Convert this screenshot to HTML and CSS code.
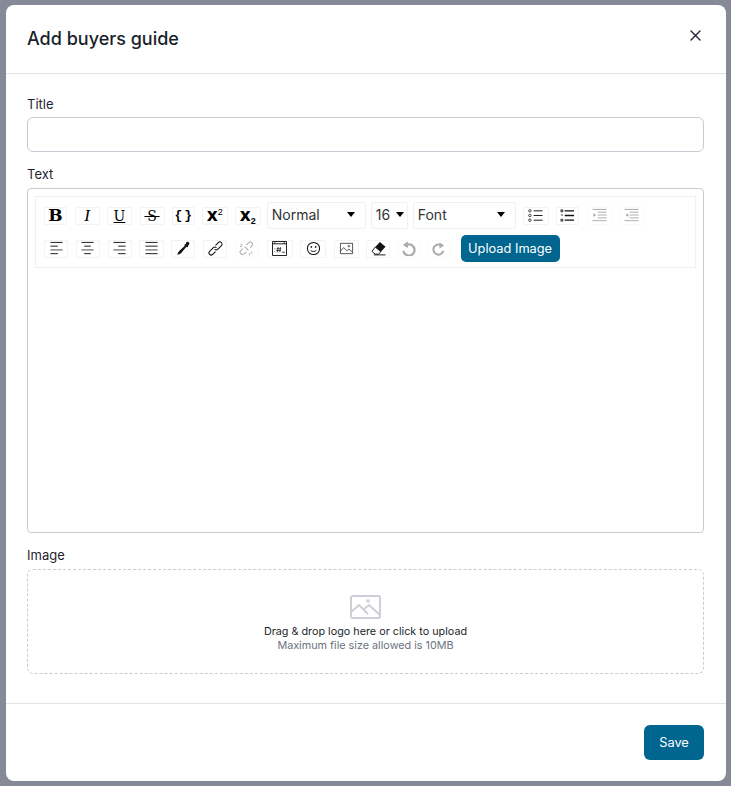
FILE: index.html
```html
<!DOCTYPE html>
<html lang="en">
<head>
    <meta charset="UTF-8">
    <meta name="viewport" content="width=device-width, initial-scale=1.0">
    <title>Add buyers guide</title>
    <link rel="stylesheet" href="styles.css">
</head>
<body>
    <div class="modal">
        <div class="modal-header">
            <h1>Add buyers guide</h1>
            <button class="close-btn" type="button" aria-label="Close">
                <svg width="11" height="11" viewBox="0 0 11 11"><path d="M1 1l9 9M10 1l-9 9" stroke="#1f2430" stroke-width="1.4" stroke-linecap="round"/></svg>
            </button>
        </div>

        <div class="modal-body">
            <label class="field-label" for="title">Title</label>
            <input class="text-input" type="text" id="title">

            <label class="field-label field-label-text">Text</label>
            <div class="editor">
                <div class="toolbar">
                    <div class="tb-row">
                        <span class="tb-btn tb-bold">B</span>
                        <span class="tb-btn tb-italic">I</span>
                        <span class="tb-btn tb-under">U</span>
                        <span class="tb-btn tb-strike">&#8201;S&#8201;</span>
                        <span class="tb-btn tb-mono">{}</span>
                        <span class="tb-btn tb-script"><span>x<sup>2</sup></span></span>
                        <span class="tb-btn tb-script"><span>x<sub>2</sub></span></span>
                        <span class="tb-select tb-select-block">Normal<i class="caret"></i></span>
                        <span class="tb-select tb-select-size">16<i class="caret"></i></span>
                        <span class="tb-select tb-select-font">Font<i class="caret"></i></span>
                        <span class="tb-btn tb-list">
                            <svg viewBox="0 0 16 16" fill="none" stroke="#111"><circle cx="2" cy="3" r="1.3" stroke-width=".8"/><circle cx="2" cy="8" r="1.3" stroke-width=".8"/><circle cx="2" cy="13" r="1.3" stroke-width=".8"/><path d="M6 3h9.500M6 8h9.500M6 13h9.500"/></svg>
                        </span>
                        <span class="tb-btn tb-narrow">
                            <svg viewBox="0 0 16 16" fill="none" stroke="#111"><path d="M1 2h2v2H1zM1 7.500h2M1 12h2v2H1z" stroke-width=".9"/><path d="M5 3h10M5 8h10M5 13h10" stroke-width="1.400"/></svg>
                        </span>
                        <span class="tb-btn is-disabled">
                            <svg viewBox="0 0 16 16" fill="none" stroke="#111"><path d="M.5 1.500h15M6 4.500h9.500M6 7.500h9.500M6 10.500h9.500M.5 13.500h15"/><path d="M1.500 5.500l3 2-3 2z" fill="#111" stroke="none"/></svg>
                        </span>
                        <span class="tb-btn is-disabled">
                            <svg viewBox="0 0 16 16" fill="none" stroke="#111"><path d="M.5 1.500h15M6 4.500h9.500M6 7.500h9.500M6 10.500h9.500M.5 13.500h15"/><path d="M4.500 5.500l-3 2 3 2z" fill="#111" stroke="none"/></svg>
                        </span>
                    </div>
                    <div class="tb-row tb-row-second">
                        <span class="tb-btn">
                            <svg viewBox="0 0 16 16" fill="none" stroke="#111"><path d="M1.500 1.500h13"/><path d="M1.500 5.500h8"/><path d="M1.500 9.500h13" stroke="#777" stroke-width="1.400"/><path d="M1.500 13.500h8"/></svg>
                        </span>
                        <span class="tb-btn">
                            <svg viewBox="0 0 16 16" fill="none" stroke="#111"><path d="M1.500 1.500h13"/><path d="M4.500 5.500h7"/><path d="M1.500 9.500h13" stroke="#777" stroke-width="1.400"/><path d="M4.500 13.500h7"/></svg>
                        </span>
                        <span class="tb-btn">
                            <svg viewBox="0 0 16 16" fill="none" stroke="#111"><path d="M1.500 1.500h13"/><path d="M6.500 5.500h8"/><path d="M1.500 9.500h13" stroke="#777" stroke-width="1.400"/><path d="M6.500 13.500h8"/></svg>
                        </span>
                        <span class="tb-btn">
                            <svg viewBox="0 0 16 16" fill="none" stroke="#111"><path d="M1.500 1.500h13"/><path d="M1.500 5.500h13"/><path d="M1.500 9.500h13" stroke="#777" stroke-width="1.400"/><path d="M1.500 13.500h13"/></svg>
                        </span>
                        <span class="tb-btn">
                            <svg viewBox="0 0 16 16"><path d="M11 1.200c.8-.8 2-.6 2.700.1s.8 1.800.1 2.600L12.500 5.300l.4.600-1 1-.8-.7-5.300 6.300c-.9 1-2.200 1.700-3.500 2l-.8.200.2-1c.3-1.200 1-2.400 2-3.300L9.500 5l-.7-.8 1-1 .6.400z" fill="#111"/></svg>
                        </span>
                        <span class="tb-btn">
                            <svg viewBox="0 0 16 16" fill="none" stroke="#111" stroke-width="1.100"><path d="M7 9a2.300 2.300 0 0 0 3.300 0l4-4A2.300 2.300 0 0 0 11 1.700L8 4.700"/><path d="M9 7a2.300 2.300 0 0 0-3.300 0l-4 4A2.300 2.300 0 0 0 5 14.300l3-3"/></svg>
                        </span>
                        <span class="tb-btn is-disabled">
                            <svg viewBox="0 0 16 16" fill="none" stroke="#111" stroke-width="1.100"><path d="M8 4l2.200-2a2.300 2.300 0 0 1 3.500 3.200L12 7.500"/><path d="M4 8l-2 2.200a2.300 2.300 0 0 0 3.200 3.500L8 12"/><path d="M6 6l4 4M2 3l1.500 1.500M12.500 11.500L14 13M11 13l.5 2M3 6L1 5.500"/></svg>
                        </span>
                        <span class="tb-btn tb-embed">
                            <svg viewBox="0 0 16 16" fill="none" stroke="#111"><path d="M.5 .5h15v15H.5zM.5 3h15"/><path d="M3 .5V3M13 .5V3" stroke-width=".8"/><path d="M3 8v.8M3 11v.8M6.500 6.500l-.7 5.500M9 6.500l-.7 5.500M4.800 8.300h5M4.500 10.200h5M10.500 12h3.500" stroke-width=".8"/></svg>
                        </span>
                        <span class="tb-btn tb-emoji">
                            <svg viewBox="0 0 16 16" fill="none" stroke="#111"><circle cx="8" cy="8" r="6.500" stroke-width="1.100"/><circle cx="5.700" cy="6.300" r=".9" fill="#111" stroke="none"/><circle cx="10.300" cy="6.300" r=".9" fill="#111" stroke="none"/><path d="M5 10c1.500 1.600 4.500 1.600 6 0"/></svg>
                        </span>
                        <span class="tb-btn tb-image">
                            <svg viewBox="0 0 16 16" fill="none" stroke="#222" stroke-width=".8"><path d="M1.500 2.500h13v11h-13z"/><path d="M1.500 11l3.500-4 3.500 3.500 2-2 3.500 3"/><circle cx="10.500" cy="5.500" r=".8"/></svg>
                        </span>
                        <span class="tb-btn tb-eraser">
                            <svg viewBox="0 0 16 16" fill="none"><path d="M9.500 1L15.500 6l-5 5.500-6-5z" fill="#111"/><path d="M4.500 6.500l6 5L8 14H4.500L1 11z" fill="#fff" stroke="#111"/><path d="M3 14.800h12.500" stroke="#111"/></svg>
                        </span>
                        <span class="tb-btn tb-narrow is-disabled">
                            <svg viewBox="0 0 16 16" fill="none"><path d="M4 5.500a6 6 0 1 1-1.500 5" stroke="#111" stroke-width="2.400"/><path d="M7.500 .5v7L2 4z" fill="#111"/></svg>
                        </span>
                        <span class="tb-btn tb-narrow is-disabled">
                            <svg viewBox="0 0 16 16" fill="none"><path d="M12 5.500a5.400 5.400 0 1 0 1.200 5" stroke="#111" stroke-width="2.200"/><path d="M9 1.500v6.500l5-3.500z" fill="#111"/></svg>
                        </span>
                        <button class="upload-btn" type="button">Upload Image</button>
                    </div>
                </div>
            </div>

            <label class="field-label field-label-image">Image</label>
            <div class="dropzone">
                <svg width="33" height="26" viewBox="0 0 33 26" fill="none" stroke="#ccd0d6" stroke-width="2"><rect x="2" y="2" width="29" height="22" rx="2"/><path d="M2 18l8-7 9 9"/><path d="M15 15l5-4 11 10"/><circle cx="19" cy="7" r=".8"/></svg>
                <p class="drop-title">Drag &amp; drop logo here or click to upload</p>
                <p class="drop-hint">Maximum file size allowed is 10MB</p>
            </div>
        </div>

        <div class="modal-footer">
            <button class="save-btn" type="button">Save</button>
        </div>
    </div>
</body>
</html>
```

FILE: styles.css
```css
* {
    box-sizing: border-box;
    margin: 0;
    padding: 0;
}

body {
    font-family: Inter, "Liberation Sans", sans-serif;
    background-color: #858a96;
    height: 786px;
    overflow: hidden;
    padding: 5px 5px 5px 6px;
}

.modal {
    background-color: #ffffff;
    border-radius: 8px;
    height: 776px;
    display: flex;
    flex-direction: column;
}

.modal-header {
    height: 69px;
    border-bottom: 1px solid #e3e4e8;
    padding: 0 25px 0 21px;
    display: flex;
    justify-content: space-between;
}

.modal-header h1 {
    font-size: 18px;
    font-weight: 500;
    line-height: 24px;
    color: #1a1f2b;
    margin-top: 22px;
}

.close-btn {
    background: none;
    border: none;
    height: 11px;
    margin-top: 24px;
}

.modal-body {
    flex: 1;
    padding: 21px 22px 0 21px;
}

.field-label {
    display: block;
    font-size: 13px;
    font-weight: 400;
    line-height: 18px;
    color: #1f2430;
    margin-bottom: 4px;
}

.text-input {
    display: block;
    width: 100%;
    height: 35px;
    border: 1px solid #c9ccd4;
    border-radius: 6px;
}

.field-label-text {
    margin-top: 13px;
    margin-bottom: 5px;
}

.editor {
    height: 345px;
    border: 1px solid #c9ccd4;
    border-radius: 4px;
    padding: 7px;
}

.toolbar {
    border: 1px solid #f1f1f1;
    padding: 5px 0 0 8px;
    height: 72px;
}

.tb-row {
    display: flex;
    align-items: center;
    gap: 7.5px;
    margin-bottom: 6px;
}

.tb-btn {
    width: 25px;
    height: 18px;
    flex: none;
    border: 1px solid #f3f3f3;
    border-radius: 2px;
    display: flex;
    align-items: center;
    justify-content: center;
    color: #000;
    font-size: 14px;
    line-height: 1;
}

.tb-btn svg {
    flex: none;
    width: 15px;
    height: 15px;
}

.tb-narrow {
    width: 23px;
}

.tb-list {
    width: 26px;
}

.tb-bold {
    width: 23px;
    font-family: "DejaVu Serif", serif;
    font-weight: 700;
    font-size: 17px;
}

.tb-italic {
    font-family: "Liberation Serif", serif;
    font-style: italic;
    font-size: 17px;
}

.tb-under {
    font-family: "DejaVu Serif", serif;
    font-size: 14px;
    text-decoration: underline;
    text-underline-offset: 1px;
}

.tb-strike {
    font-family: "DejaVu Serif", serif;
    font-size: 14px;
    text-decoration: line-through;
}

.tb-mono {
    width: 22.5px;
    font-family: "Liberation Mono", monospace;
    font-weight: 700;
    font-size: 13px;
    letter-spacing: 2px;
    padding-left: 2px;
}

.tb-script {
    width: 25.5px;
    font-family: "DejaVu Sans", sans-serif;
    font-weight: 700;
    font-size: 17px;
}

.tb-script sup,
.tb-script sub {
    font-family: "Liberation Sans", sans-serif;
    font-size: 9px;
    line-height: 0;
}

.tb-script sup {
    vertical-align: 6px;
    font-weight: 400;
}

.tb-script sub {
    vertical-align: -3px;
}

.tb-select {
    height: 27px;
    flex: none;
    margin: 0 -1.25px;
    border: 1px solid #f1f1f1;
    border-radius: 2px;
    padding: 0 10px 2px 4px;
    display: flex;
    align-items: center;
    justify-content: space-between;
    font-size: 14px;
    color: #333;
}

.tb-select-block {
    width: 99px;
}

.tb-select-size {
    width: 37px;
    padding-right: 3px;
}

.tb-select-font {
    width: 103.5px;
}

.caret {
    width: 0;
    height: 0;
    border-left: 4px solid transparent;
    border-right: 4px solid transparent;
    border-top: 5px solid #000;
}

.tb-row-second .tb-btn {
    width: 24.3px;
}

.tb-row-second .tb-embed,
.tb-row-second .tb-emoji {
    width: 26px;
}

.tb-row-second .tb-image {
    width: 25px;
}

.tb-row-second .tb-eraser {
    width: 24px;
}

.tb-row-second .tb-narrow {
    width: 23px;
    padding-right: 2px;
}

.upload-btn {
    margin-left: 2px;
    height: 27px;
    width: 99px;
    background-color: #00658f;
    color: #ffffff;
    border: none;
    border-radius: 5px;
    font-family: inherit;
    font-size: 12.800px;
}

.field-label-image {
    margin-top: 13px;
    margin-bottom: 5px;
}

.dropzone {
    height: 105px;
    border: 1px dashed #c9ccd4;
    border-radius: 6px;
    display: flex;
    flex-direction: column;
    align-items: center;
    padding-top: 24px;
}

.drop-title {
    font-size: 10.800px;
    line-height: 14px;
    color: #1a1f2b;
    margin-top: 5px;
}

.drop-hint {
    font-size: 10.800px;
    line-height: 14px;
    color: #6b7280;
}

.modal-footer {
    height: 78px;
    border-top: 1px solid #e3e4e8;
    padding: 21px 22px 0 0;
    display: flex;
    justify-content: flex-end;
}

.save-btn {
    width: 60px;
    height: 35px;
    background-color: #00658f;
    color: #ffffff;
    border: none;
    border-radius: 6px;
    font-family: inherit;
    font-size: 12.800px;
}

.is-disabled {
    opacity: 0.35;
}
```
